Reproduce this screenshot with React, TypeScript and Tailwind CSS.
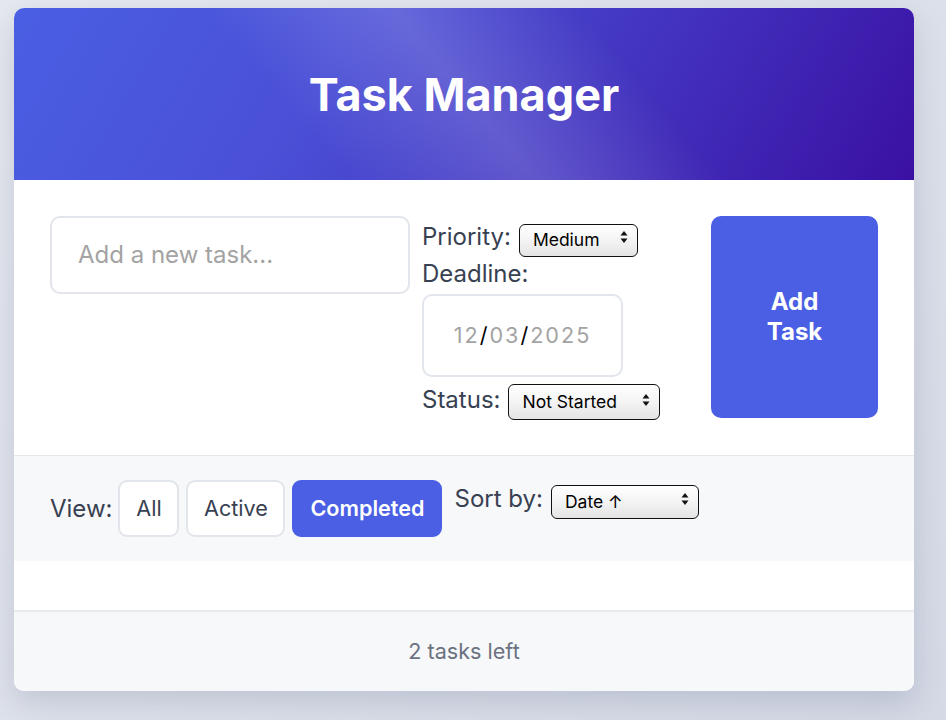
import React from "react";

function Arrows() {
  return (
    <svg width="8" height="13" viewBox="0 0 8 13" className="pointer-events-none absolute right-[10px] top-1/2 -translate-y-1/2">
      <path d="M4 0.5 L7.5 5 L0.5 5 Z" fill="#111" />
      <path d="M4 12.5 L7.5 8 L0.5 8 Z" fill="#111" />
    </svg>
  );
}

function FakeSelect({ value, cls }: { value: string; cls: string }) {
  return (
    <div className={`relative shrink-0 ${cls}`}>
      <select
        defaultValue={value}
        className="h-full w-full appearance-none rounded-[6px] border-[1.5px] border-[#111] bg-[linear-gradient(180deg,#ffffff_0%,#f5f5f5_45%,#e4e4e4_100%)] pl-[13px] text-[17.5px] text-black font-['Inter','Noto_Sans',sans-serif] shadow-[inset_0_1px_1px_rgba(255,255,255,0.9)] outline-none"
      >
        <option>{value}</option>
      </select>
      <Arrows />
    </div>
  );
}

export default function App() {
  return (
    <div className="min-h-[720px] w-full bg-[linear-gradient(135deg,#e5e8ef_0%,#dde1ea_50%,#d4d9e5_100%)] pt-[8px] pl-[14px] font-['Inter','Noto_Sans',sans-serif]">
      <div className="w-[900px] overflow-hidden rounded-[10px] bg-white shadow-[0_12px_30px_rgba(60,70,110,0.18)]">
        {/* Header */}
        <div className="flex h-[172px] items-center justify-center bg-[linear-gradient(50deg,rgba(255,255,255,0)_32%,rgba(255,255,255,0.16)_50%,rgba(255,255,255,0)_68%),linear-gradient(120deg,#4a5fe3_0%,#4a4fd6_35%,#4335c0_65%,#3a10a3_100%)]">
          <h1 className="text-[45px] font-bold text-white leading-none">Task Manager</h1>
        </div>

        {/* Form */}
        <div className="flex items-stretch gap-[12px] px-[36px] pt-[36px] pb-[37px]">
          <div className="w-[360px] shrink-0">
            <div className="flex h-[78px] items-center rounded-[10px] border-2 border-[#e2e5eb] pl-[26px] text-[24px] text-[#a3a3a3]">
              Add a new task...
            </div>
          </div>

          <div className="flex w-[277px] shrink-0 flex-col text-[24px] text-[#374151]">
            <div className="mt-[4px] flex h-[33px] items-center gap-[8px]">
              <span>Priority:</span>
              <FakeSelect value="Medium" cls="h-[33px] w-[119px]" />
            </div>
            <div className="flex h-[41px] items-center">Deadline:</div>
            <div className="flex h-[83px] w-[201px] items-center justify-center rounded-[10px] border-2 border-[#e2e5eb] text-[21.6px] tracking-[2px] text-[#a3a3a3]">
              <span>12</span>
              <span className="text-black">/</span>
              <span>03</span>
              <span className="text-black">/</span>
              <span>2025</span>
            </div>
            <div className="mt-[5px] flex h-[36px] items-center gap-[8px]">
              <span>Status:</span>
              <FakeSelect value="Not Started" cls="h-[36px] w-[152px]" />
            </div>
          </div>

          <button className="w-[167px] shrink-0 rounded-[10px] bg-[#4a5fe4] px-[30px] text-[24px] font-bold leading-[30px] text-white">
            Add<br />Task
          </button>
        </div>

        {/* Filter */}
        <div className="flex items-start gap-[12px] border-t border-[#e5e7eb] bg-[#f7f8fa] px-[36px] py-[24px] text-[24px] text-[#374151]">
          <div className="flex items-center gap-[7px]">
            <span className="mr-[-1px]">View:</span>
            <button className="h-[57px] w-[61px] rounded-[9px] border-2 border-[#e2e5eb] bg-white text-[21.6px]">All</button>
            <button className="h-[57px] w-[99px] rounded-[9px] border-2 border-[#e2e5eb] bg-white text-[21.6px]">Active</button>
            <button className="h-[57px] w-[150px] rounded-[9px] border-2 border-[#4a5fe4] bg-[#4a5fe4] text-[21.6px] font-semibold text-white">Completed</button>
          </div>
          <div className="mt-[1px] flex items-center gap-[8px]">
            <span>Sort by:</span>
            <FakeSelect value="Date ↑" cls="h-[34px] w-[148px]" />
          </div>
        </div>

        {/* Empty list */}
        <div className="h-[49px] bg-white"></div>

        {/* Footer */}
        <div className="flex h-[81px] items-center justify-center border-t-2 border-[#e8eaee] bg-[#f7f8fa] text-[21.6px] text-[#6b7280]">
          2 tasks left
        </div>
      </div>
    </div>
  );
}
